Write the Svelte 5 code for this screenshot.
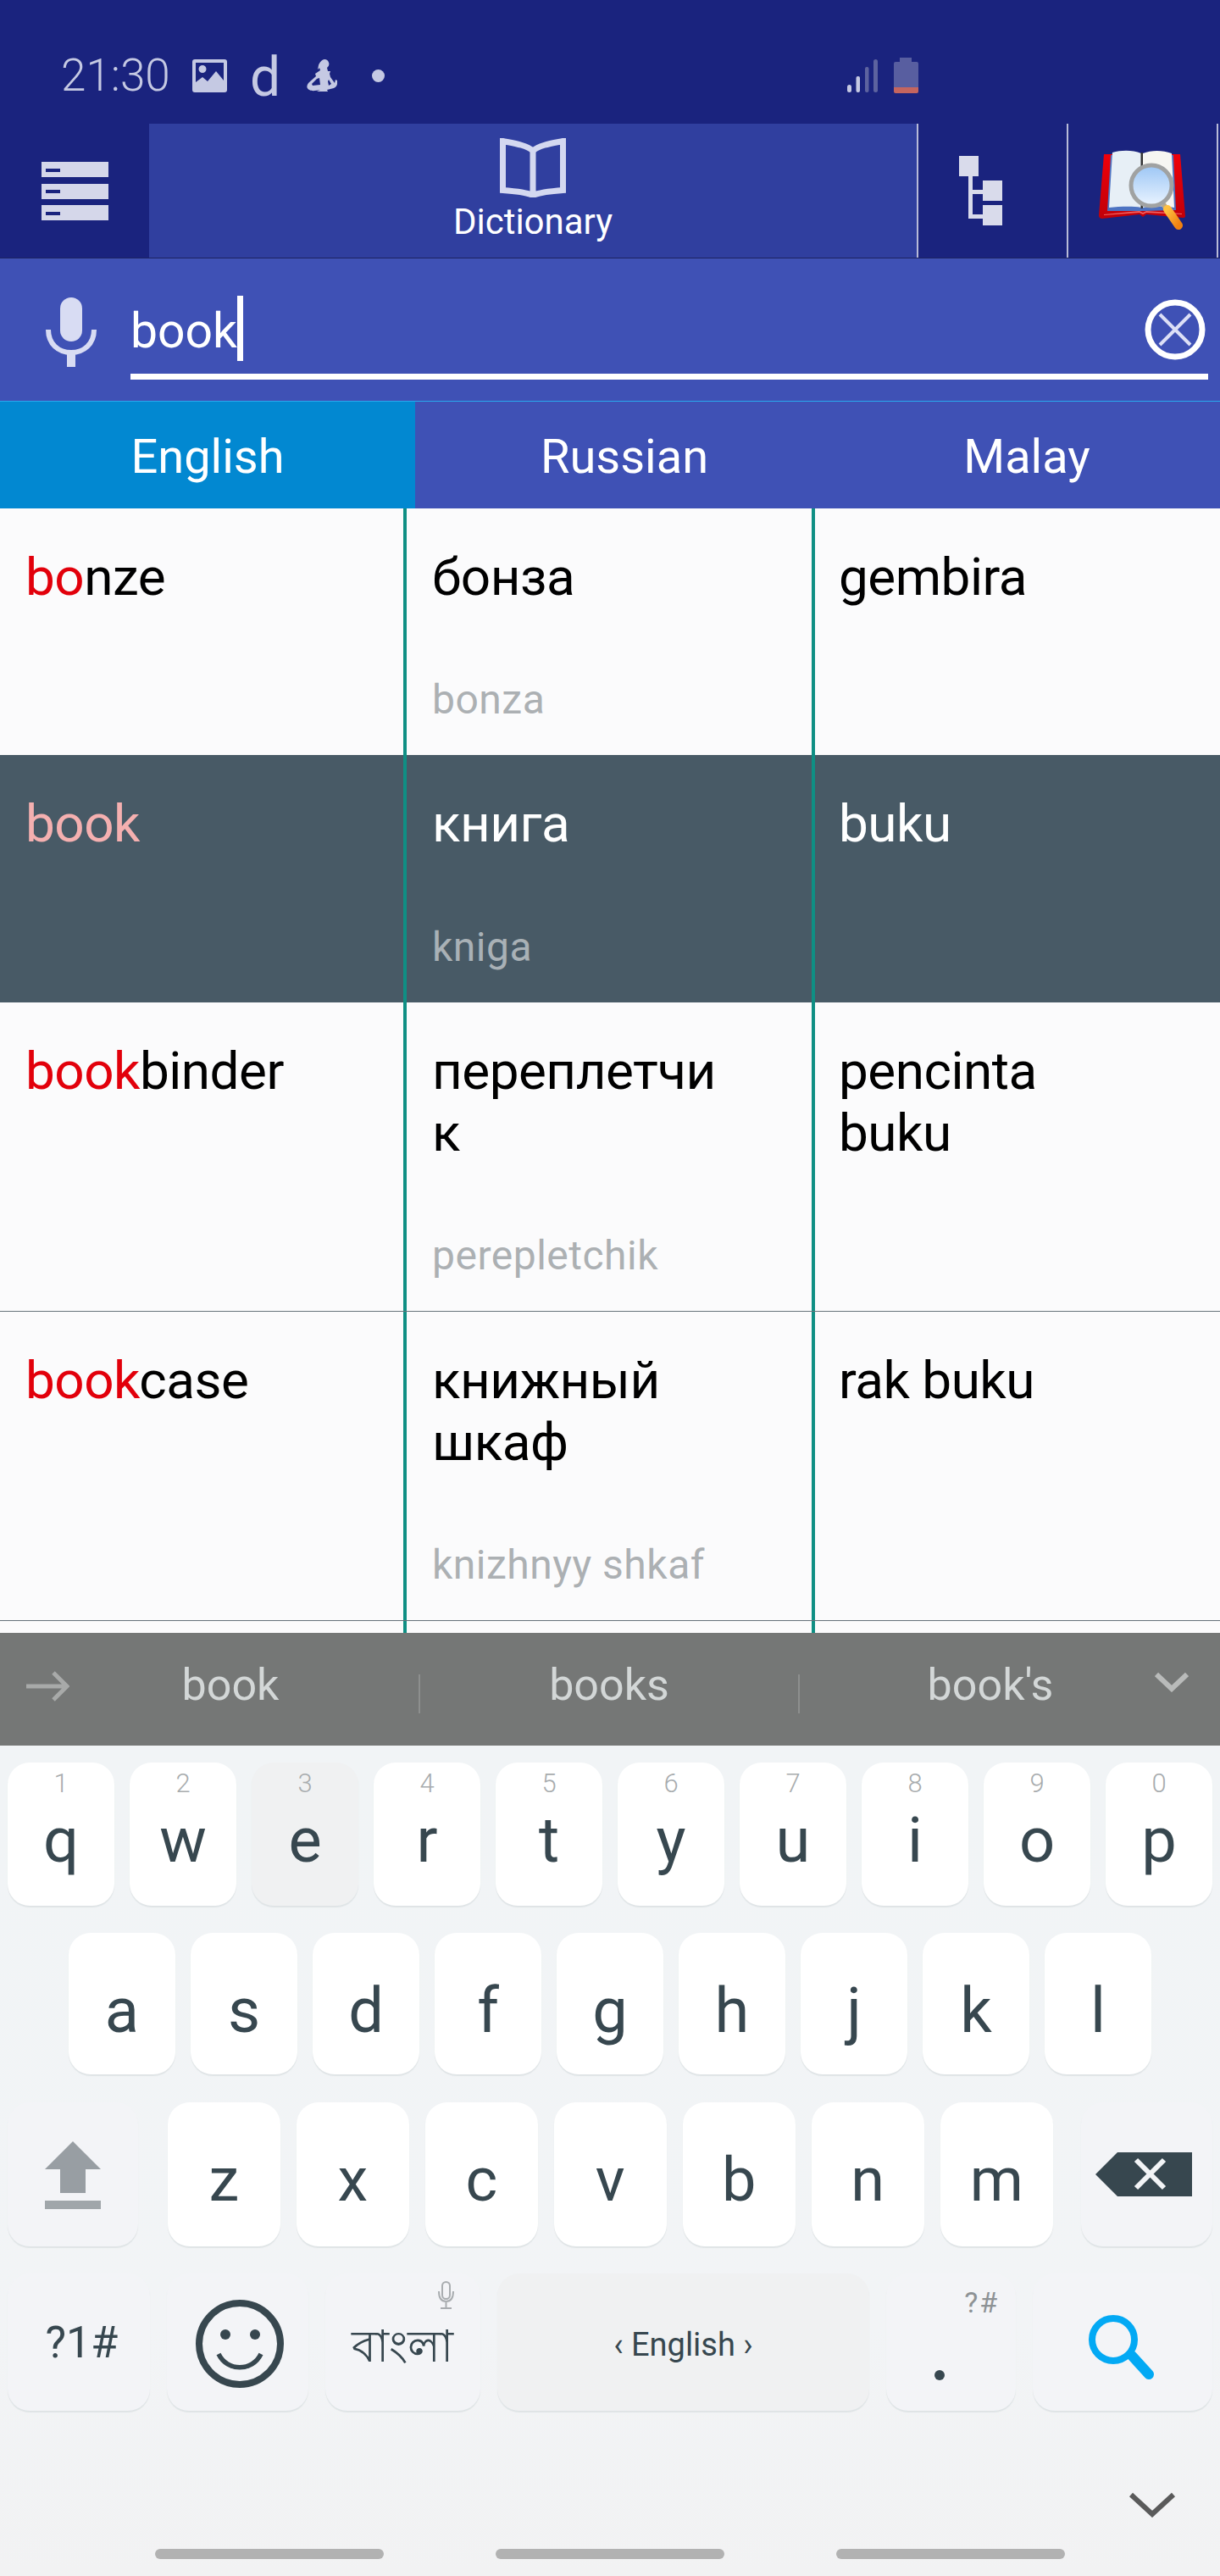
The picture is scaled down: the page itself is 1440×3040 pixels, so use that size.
<script>
  const rows = [
    { h: 291, hit: 'bo', rest: 'nze', ru: ['бонза'], tr: 'bonza', ms: ['gembira'] },
    { h: 292, hit: 'book', rest: '', ru: ['книга'], tr: 'kniga', ms: ['buku'], sel: true },
    { h: 365, hit: 'book', rest: 'binder', ru: ['переплетчи', 'к'], tr: 'perepletchik', ms: ['pencinta', 'buku'], line: true },
    { h: 365, hit: 'book', rest: 'case', ru: ['книжный', 'шкаф'], tr: 'knizhnyy shkaf', ms: ['rak buku'], line: true }
  ];
  const row1 = [['q','1'],['w','2'],['e','3'],['r','4'],['t','5'],['y','6'],['u','7'],['i','8'],['o','9'],['p','0']];
  const row2 = ['a','s','d','f','g','h','j','k','l'];
  const row3 = ['z','x','c','v','b','n','m'];
</script>

<div class="phone">
  <header class="status">
    <span class="time">21:30</span>
    <svg class="s-pic" viewBox="0 0 41 39"><path fill="#c5c9e3" fill-rule="evenodd" d="M3 0h35a3 3 0 0 1 3 3v33a3 3 0 0 1-3 3H3a3 3 0 0 1-3-3V3a3 3 0 0 1 3-3zM4 4v23l8-6 6 5 10-12 9 11V4zM12 7a4.500 4.500 0 1 1 0 9 4.500 4.500 0 0 1 0-9z"/></svg>
    <span class="s-d">d</span>
    <svg class="s-fig" viewBox="0 0 36 38"><path fill="#c5c9e3" fill-rule="evenodd" d="M21 0a5.500 5.500 0 0 1 3 10l1 4h3l-1 3 1 4 5 7 1-4 2 1c1 4-1 8-4 9l-8 2 1 2H12l4-2c-5 1-10 2-13 0-4-2-3-6 0-9l8-7-1-3 6-4-1-3 1-1-3 3 1-5c1-3 4-7 7-7zM12 23l-6 6 1 2 9-1-1-8zM25 26l1 5 3-2-3-5z"/></svg>
    <i class="s-dot"></i>
    <span class="s-gap"></span>
    <svg class="s-sig" viewBox="0 0 36 39"><g fill="#c5c9e3"><rect x="0" y="30" width="5" height="9" rx="2.500"/><rect x="10.500" y="20" width="4.500" height="19" rx="2"/></g><g fill="#5d639f"><rect x="21" y="9" width="4.500" height="30" rx="2"/><rect x="31" y="0" width="5" height="39" rx="2.500"/></g></svg>
    <svg class="s-bat" viewBox="0 0 29 42"><path fill="#585ea0" d="M7 0h14v5h6a2 2 0 0 1 2 2v28H0V7a2 2 0 0 1 2-2h5z"/><path fill="#c4655f" d="M0 35h29v5a2 2 0 0 1-2 2H2a2 2 0 0 1-2-2z"/></svg>
  </header>

  <nav class="bar">
    <div class="menu">
      <svg viewBox="0 0 79 69" class="menu-ic"><g fill="#d5d7ea"><rect y="0" width="79" height="18"/><rect y="26" width="79" height="18"/><rect y="51" width="79" height="18"/></g><g fill="#1a237e"><rect x="5" y="8" width="17" height="4"/><rect x="5" y="33" width="17" height="4"/><rect x="5" y="59" width="17" height="4"/></g></svg>
    </div>
    <div class="dict">
      <svg class="book-ic" viewBox="0 0 78 70"><path fill="none" stroke="#d4d8f0" stroke-width="7" d="M39 15C31 8 16 6 3.500 3.500v58c14 1 27 2 35.500 6 9-4 22-5 35.500-6v-58C62 6 47 8 39 15zv52"/></svg>
      <span>Dictionary</span>
    </div>
    <div class="tool">
      <svg class="tree-ic" viewBox="0 0 52 82"><g fill="#d9dbeb"><rect x="0" y="0" width="23" height="24"/><rect x="28" y="29" width="23" height="24"/><rect x="28" y="58" width="23" height="24"/><path d="M11 20h5v20h14v5H16v24h14v5H11z"/></g></svg>
    </div>
    <div class="tool last">
      <svg class="lookup-ic" viewBox="0 0 104 96">
        <defs>
          <linearGradient id="lens" x1="0" y1="0" x2="0" y2="1"><stop offset="0" stop-color="#9cc6f5"/><stop offset="1" stop-color="#eaf4ff"/></linearGradient>
          <linearGradient id="handle" x1="0" y1="0" x2="1" y2="1"><stop offset="0" stop-color="#ffc040"/><stop offset="1" stop-color="#f08010"/></linearGradient>
          <linearGradient id="redb" x1="0" y1="0" x2="0" y2="1"><stop offset="0" stop-color="#f0000a"/><stop offset="1" stop-color="#c00008"/></linearGradient>
        </defs>
        <path fill="url(#redb)" d="M6 5h10v15h70V5h10l6 73q0 2-3 2L56 76l-4 3-4-3L4 81q-4 0-4-4z"/>
        <path fill="#f06060" d="M6 76l42-4 4 2 4-2 42 3v1l-42-2-4 2-4-2-42 3z"/>
        <path fill="#4d73c2" d="M14 6h74l3 65-38 1h-3l-40 0z"/>
        <path fill="#e7eff6" d="M16 3C27 0 40 0 50 4v64c-11-2-26-1-38 0z"/>
        <path fill="#f6f6f2" d="M52 4C62 0 75 0 86 4l3 64c-12-2-27-2-37 0z"/>
        <path fill="#333" d="M49.500 3h2.500v66h-2.500z"/>
        <path stroke="#b9a98a" stroke-width="6" d="M76 64l5 7"/>
        <path stroke="url(#handle)" stroke-width="10" stroke-linecap="round" d="M81 70l13 19"/>
        <circle cx="62" cy="42" r="24" fill="url(#lens)" stroke="#a0a2a2" stroke-width="5"/>
      </svg>
    </div>
  </nav>

  <section class="search">
    <svg class="mic" viewBox="0 0 60 82"><rect x="17" y="0" width="26" height="52" rx="13" fill="#d8dcf3"/><path d="M3 38c0 17 12 27 27 27s27-10 27-27" fill="none" stroke="#d8dcf3" stroke-width="6"/><rect x="25" y="64" width="10" height="18" fill="#d8dcf3"/></svg>
    <div class="field"><span class="typed">book</span><i class="caret"></i></div>
    <svg class="clear" viewBox="0 0 72 72"><circle cx="36" cy="36" r="32" fill="none" stroke="#fff" stroke-width="7"/><path fill="none" stroke="#dcdff6" stroke-width="4" d="M18 18l36 36M54 18L18 54"/></svg>
  </section>

  <div class="tabs">
    <div class="tab on">English</div>
    <div class="tab">Russian</div>
    <div class="tab">Malay</div>
  </div>

  <div class="list">
    {#each rows as r}
      <div class="row" class:sel={r.sel} class:line={r.line} style="height:{r.h}px">
        <div class="cell"><div class="word"><span class="hit">{r.hit}</span>{r.rest}</div></div>
        <div class="cell mid">
          <div class="word">{#each r.ru as l}<div>{l}</div>{/each}</div>
          <div class="tr">{r.tr}</div>
        </div>
        <div class="cell third"><div class="word">{#each r.ms as l}<div>{l}</div>{/each}</div></div>
      </div>
    {/each}
    <div class="row tail"><div class="cell"></div><div class="cell mid"></div><div class="cell"></div></div>
  </div>

  <div class="suggest">
    <svg class="sg-arrow" viewBox="0 0 51 36"><path fill="none" stroke="#a8aaa9" stroke-width="5" d="M0 18h46M32 2l16 16-16 16"/></svg>
    <span class="sg w1">book</span><i class="sep s1"></i>
    <span class="sg w2">books</span><i class="sep s2"></i>
    <span class="sg w3">book's</span>
    <svg class="sg-chev" viewBox="0 0 40 24"><path fill="none" stroke="#b9bbba" stroke-width="6" d="M2 3l18 17L38 3"/></svg>
  </div>

  <div class="kbd">
    <div class="krow r1">
      {#each row1 as [k, n]}
        <div class="key white" class:pressed={k === 'e'}><small>{n}</small><b>{k}</b></div>
      {/each}
    </div>
    <div class="krow r2">
      {#each row2 as k}<div class="key white"><b>{k}</b></div>{/each}
    </div>
    <div class="krow r3">
      <div class="key fn shift">
        <svg viewBox="0 0 66 80" class="shift-ic"><path fill="#989ea3" d="M33 0l33 33H48v28H18V33H0z"/><rect y="70" width="66" height="10" fill="#a0a6aa"/></svg>
      </div>
      {#each row3 as k}<div class="key white"><b>{k}</b></div>{/each}
      <div class="key fn del">
        <svg viewBox="0 0 114 52" class="del-ic"><path fill="#37474f" d="M26 0h88v52H26L0 26z"/><path stroke="#f2f4f6" stroke-width="6" d="M48 9l33 33M81 9L48 42"/></svg>
      </div>
    </div>
    <div class="krow r4">
      <div class="key fn sym">?1#</div>
      <div class="key fn emo">
        <svg viewBox="0 0 104 104" class="emo-ic"><circle cx="52" cy="52" r="48" fill="none" stroke="#37474f" stroke-width="8"/><circle cx="35" cy="41" r="6" fill="#37474f"/><circle cx="70" cy="41" r="6" fill="#37474f"/><path d="M27 64c10 21 40 21 50 0" fill="none" stroke="#37474f" stroke-width="5.500"/></svg>
      </div>
      <div class="key fn bn">
        <svg viewBox="0 0 21 33" class="bn-mic"><g fill="none" stroke="#a9adb0" stroke-width="2"><rect x="6" y="1" width="9" height="20" rx="4.500"/><path d="M2 12c0 8 3 12 8.500 12S19 20 19 12M10.500 24v7M4 32h13"/></g></svg>
        <span lang="bn">বাংলা</span>
      </div>
      <div class="key space">‹ English ›</div>
      <div class="key fn dot"><small>?#</small><i></i></div>
      <div class="key fn go">
        <svg viewBox="0 0 78 78" class="go-ic"><circle cx="29" cy="29" r="25" fill="none" stroke="#03a9f4" stroke-width="8"/><path d="M51 48l20 22" stroke="#03a9f4" stroke-width="12" stroke-linecap="round"/></svg>
      </div>
    </div>
    <div class="foot">
      <svg viewBox="0 0 56 30" class="down"><path fill="none" stroke="#5a5a5a" stroke-width="6" d="M3 3l25 23L53 3"/></svg>
      <div class="pills"><i></i><i></i><i></i></div>
    </div>
  </div>
</div>

<style>
  :global(body) { margin: 0; background: #f2f3f4; }
  .phone {
    width: 1440px; height: 3040px; overflow: hidden; position: relative;
    font-family: Roboto, "Noto Sans", sans-serif;
    background: #f2f3f4;
  }
  i { display: block; }

  .status {
    height: 146px; box-sizing: border-box; background: #1a237e;
    display: flex; align-items: center; padding: 32px 0 0 72px;
  }
  .time { color: #c5c9e3; font-size: 53px; font-weight: 300; width: 155px; }
  .s-pic { width: 41px; height: 39px; }
  .s-d { color: #c5c9e3; font-size: 64px; line-height: 1; margin-left: 27px; width: 40px; margin-top: 6px; }
  .s-fig { width: 36px; height: 38px; margin-left: 27px; }
  .s-dot { width: 15px; height: 15px; border-radius: 50%; background: #c5c9e3; margin-left: 41px; }
  .s-gap { flex: 1; }
  .s-sig { width: 36px; height: 39px; }
  .s-bat { width: 29px; height: 42px; margin-left: 19px; margin-right: 356px; }

  .bar { height: 159px; display: flex; background: #1a237e; border-bottom: 1px solid #1c2260; box-sizing: border-box; }
  .menu { width: 176px; display: flex; align-items: center; padding-left: 49px; box-sizing: border-box; }
  .menu-ic { width: 79px; height: 69px; }
  .dict { width: 906px; background: #303f9f; display: flex; flex-direction: column; align-items: center; color: #fff; font-size: 42px; }
  .book-ic { width: 78px; height: 70px; margin-top: 17px; }
  .dict span { line-height: 52px; margin-top: 3px; }
  .tool { width: 177px; display: flex; align-items: center; justify-content: center; border-left: 2px solid #b8bbd8; box-sizing: border-box; }
  .tool.last { border-right: 2px solid #b8bbd8; width: 179px; }
  .tree-ic { width: 52px; height: 82px; margin-left: -27px; }
  .lookup-ic { width: 104px; height: 96px; }

  .search { height: 168px; background: #3f51b5; display: flex; align-items: flex-start; position: relative; border-bottom: 1px solid #29a9ee; }
  .mic { width: 60px; height: 82px; margin: 46px 0 0 54px; flex: none; }
  .field { margin: 26px 0 0 40px; width: 1272px; height: 110px; border-bottom: 7px solid #fff; display: flex; align-items: flex-start; color: #fff; }
  .typed { font-size: 57px; line-height: 80px; margin-top: 20px; }
  .caret { width: 7px; height: 77px; background: #fff; margin-top: 18px; }
  .clear { position: absolute; left: 1351px; top: 48px; width: 72px; height: 72px; }

  .tabs { height: 126px; display: flex; background: #3f51b5; color: #fff; }
  .tab { display: flex; align-items: center; justify-content: center; font-size: 56px; padding-top: 3px; box-sizing: border-box; }
  .tab:nth-child(1) { width: 490px; }
  .tab:nth-child(2) { width: 494px; }
  .tab:nth-child(3) { flex: 1; }
  .tab.on { background: #0288d1; }

  .list { height: 1327px; overflow: hidden; background: #fbfbfc; }
  .row { display: grid; grid-template-columns: 476px 486px 1fr; box-sizing: border-box; background: #fbfbfc; color: #000; }
  .row.line { border-bottom: 1px solid #66727a; }
  .row.sel { background: #485a66; color: #fff; }
  .row.tail { height: 14px; }
  .cell { padding: 44px 30px 0 30px; box-sizing: border-box; font-size: 62px; line-height: 73px; position: relative; min-height: 0; letter-spacing: -0.5px; }
  .mid { border-left: 4px solid #0f8f84; border-right: 4px solid #0f8f84; padding-left: 30px; display: flex; flex-direction: column; }
  .third { padding-left: 28px; }
  .hit { color: #e2000b; }
  .sel .hit { color: #f5b0b0; }
  .tr { position: absolute; left: 30px; bottom: 35px; font-size: 48px; line-height: 60px; color: #acb0b3; letter-spacing: 0.5px; }
  .sel .tr { color: #a9b1b6; }

  .suggest { height: 133px; background: #757776; position: relative; color: #d3d7d7; font-size: 52px; }
  .sg-arrow { position: absolute; left: 31px; top: 45px; width: 51px; height: 36px; }
  .sg { position: absolute; top: 27px; line-height: 70px; transform: translateX(-50%); }
  .w1 { left: 272px; } .w2 { left: 719px; } .w3 { left: 1169px; }
  .sep { position: absolute; top: 49px; width: 2px; height: 46px; background: #8d8f8e; }
  .s1 { left: 494px; }
  .s2 { left: 942px; }
  .sg-chev { position: absolute; left: 1363px; top: 46px; width: 40px; height: 24px; }

  .kbd { height: 980px; background: linear-gradient(#f1f4f6, #f2f4f6 70%, #f2f2f3); box-sizing: border-box; padding-top: 20px; position: relative; }
  .krow { display: flex; padding: 0 9px; gap: 18px; }
  .r1 { height: 169px; }
  .r2 { height: 167px; margin-top: 32px; padding: 0 0 0 81px; }
  .r3 { height: 170px; margin-top: 33px; gap: 18.500px; }
  .r4 { height: 162px; margin-top: 32px; gap: 20px; }
  .key {
    border-radius: 26px; box-shadow: 0 2px 1px #dfe4e6; position: relative;
    display: flex; align-items: center; justify-content: center; color: #37474f;
    box-sizing: border-box;
  }
  .white { background: #fff; width: 126px; align-items: flex-start; padding-top: 52px; }
  .r3 .white { width: 133.500px; }
  .pressed { background: #f0f1f2; }
  .key b { font-weight: 400; font-size: 74px; line-height: 80px; }
  .r3 .key b { font-size: 72px; }
  .key small { position: absolute; top: 5px; left: 0; right: 0; text-align: center; color: #a8acae; font-size: 31px; line-height: 40px; font-weight: 300; }
  .fn { background: #f3f4f7; }
  .shift { width: 154px; margin-right: 16px; }
  .del { width: 155px; margin-left: 14px; }
  .shift-ic { width: 66px; height: 80px; margin-top: 2px; }
  .del-ic { width: 114px; height: 52px; margin-left: -6px; }
  .sym { width: 168px; font-size: 52px; padding-left: 7px; }
  .emo { width: 167px; }
  .emo-ic { width: 104px; height: 104px; margin-left: 5px; margin-top: 4px; }
  .bn { width: 183px; font-size: 52px; font-family: "Noto Sans", "DejaVu Sans", sans-serif; }
  .bn span { margin-top: 16px; }
  .bn-mic { position: absolute; left: 132px; top: 9px; width: 21px; height: 33px; }
  .space { width: 440px; background: #f0f1f2; font-size: 38px; padding-top: 5px; }
  .dot { width: 153px; }
  .dot small { left: auto; right: 20px; top: 14px; font-size: 34px; color: #8d9295; font-weight: 400; letter-spacing: 2px; }
  .dot i { position: absolute; left: 57px; top: 114px; width: 12px; height: 12px; border-radius: 50%; background: #37474f; }
  .go { width: 212px; }
  .go-ic { width: 78px; height: 78px; margin-left: -3px; margin-top: 14px; }
  .foot { position: relative; }
  .down { position: absolute; left: 1332px; top: 96px; width: 56px; height: 30px; }
  .pills { position: absolute; top: 163px; left: 183px; display: flex; gap: 132px; }
  .pills i { width: 270px; height: 12px; border-radius: 6px; background: #b2b2b2; }
</style>
